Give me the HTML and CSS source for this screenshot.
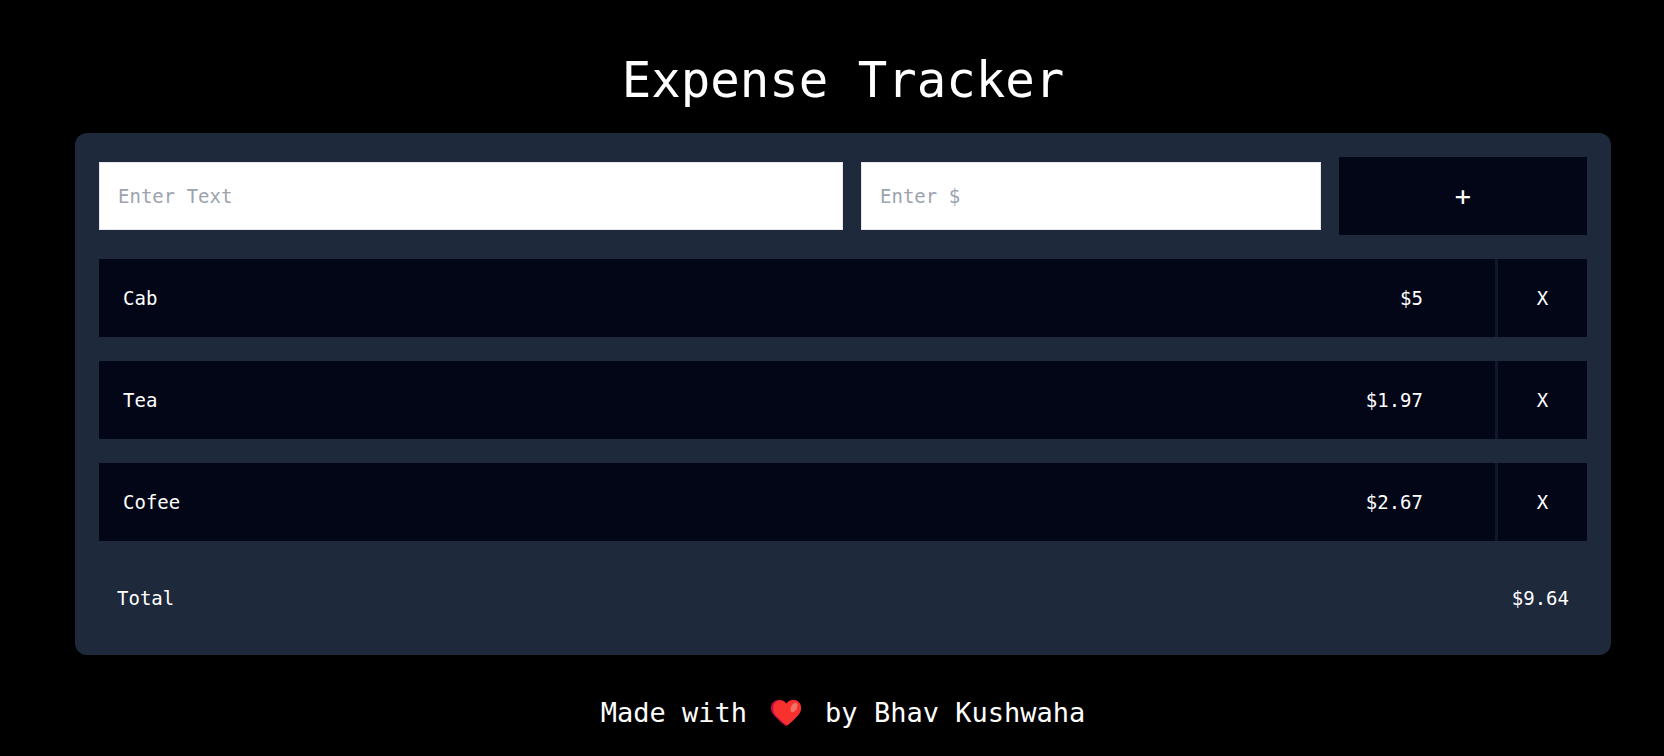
FILE: index.html
```html
<!DOCTYPE html>
<html lang="en">
<head>
<meta charset="utf-8">
<meta name="viewport" content="width=device-width, initial-scale=1">
<title>Expense Tracker</title>
<link rel="stylesheet" href="styles.css">
</head>
<body>
<main class="page">
  <h1 class="title">Expense Tracker</h1>
  <section class="card">
    <form class="entry-form">
      <input class="field" type="text" placeholder="Enter Text" aria-label="Expense name">
      <input class="field" type="text" inputmode="decimal" placeholder="Enter $" aria-label="Amount">
      <button class="add-button" type="button">+</button>
    </form>
    <ul class="expenses">
      <li class="expense">
        <div class="expense-info"><span>Cab</span><span>$5</span></div>
        <button class="remove-button" type="button">X</button>
      </li>
      <li class="expense">
        <div class="expense-info"><span>Tea</span><span>$1.97</span></div>
        <button class="remove-button" type="button">X</button>
      </li>
      <li class="expense">
        <div class="expense-info"><span>Cofee</span><span>$2.67</span></div>
        <button class="remove-button" type="button">X</button>
      </li>
    </ul>
    <div class="total"><span>Total</span><span>$9.64</span></div>
  </section>
  <footer class="footer">
    <span>Made with</span>
    <svg class="heart" viewBox="0 0 30 26" role="img" aria-label="love">
      <path fill="#ca0b4a" d="M15 26C14 26 4 17 2 14C.5 12 0 10 0 8C0 3 3.500 0 7.500 0C11 0 13.500 1.500 15 4C16.500 1.500 19 0 22 0C26.500 0 30 3 30 8C30 10 29.500 12 28 14C26 17 16 26 15 26Z"/>
      <path fill="#f8312f" d="M16 25.300C15 25 6.500 17.500 4.500 15C3 13 2.300 11 2.300 8.500C2.300 3.500 5.500 .3 9 .3C12 .3 14.500 2 15.500 4C17 1.500 19.500 0 22.500 0C27 0 30 3.500 30 8C30 10 29.500 12 28 14C26 17 17 25.300 16 25.300Z"/>
      <ellipse cx="23" cy="7.500" rx="3" ry="5" transform="rotate(28 23 7.500)" fill="#f37366"/>
    </svg>
    <span>by Bhav Kushwaha</span>
  </footer>
</main>
</body>
</html>
```
FILE: styles.css
```css
* {
  box-sizing: border-box;
}

body {
  margin: 0;
  background: #000;
  color: #fff;
  font: 19px/30px Consolas, "DejaVu Sans Mono", monospace;
}

.page {
  padding: 54px 53px 24px 75px;
}

.title {
  margin: 0 0 25px;
  font-size: 49px;
  font-weight: 400;
  line-height: 54px;
  text-align: center;
}

.card {
  display: flex;
  flex-direction: column;
  gap: 24px;
  padding: 24px;
  border-radius: 12px;
  background: #1e293b;
}

.entry-form {
  display: grid;
  grid-template-columns: 50% 1fr 16.6667%;
  align-items: center;
  gap: 18px;
}

.field {
  width: 100%;
  height: 68px;
  padding: 18px;
  border: 1px solid #e5e7eb;
  border-radius: 0;
  background: #fff;
  color: #111827;
  font: inherit;
}

.field::placeholder {
  color: #9ca3af;
  opacity: 1;
}

.add-button,
.remove-button {
  padding: 24px;
  border: 0;
  background: #020617;
  color: #fff;
  font: inherit;
  cursor: pointer;
}

.add-button {
  font-size: 27px;
}

.expenses {
  display: flex;
  flex-direction: column;
  gap: 24px;
  margin: 0;
  padding: 0;
  list-style: none;
}

.expense {
  display: flex;
  background: #020617;
}

.expense-info {
  display: flex;
  flex: 1;
  justify-content: space-between;
  padding: 24px 72px 24px 24px;
}

.remove-button {
  width: 92px;
  border-left: 3px solid #0f172a;
}

.total {
  display: flex;
  justify-content: space-between;
  padding: 18px;
}

.footer {
  display: flex;
  align-items: center;
  justify-content: center;
  gap: 24px;
  margin-top: 40px;
  font-size: 27px;
  line-height: 36px;
}

.heart {
  width: 30px;
  height: 26px;
}
```
